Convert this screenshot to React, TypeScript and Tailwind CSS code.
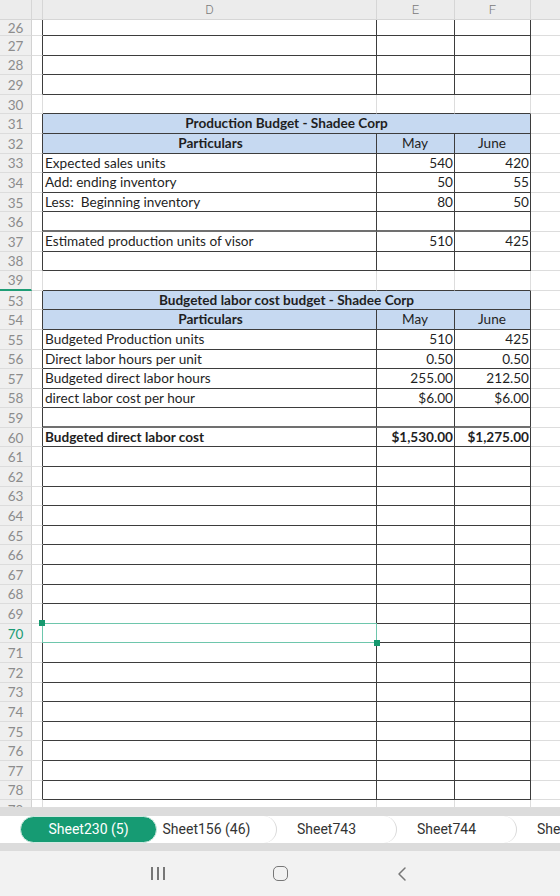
import clsx from "clsx";

type Row = {
  n: number;
  h?: string;
  boxed?: boolean;
  kind?: "title" | "head";
  label?: string;
  may?: string;
  june?: string;
  bold?: boolean;
  thick?: boolean;
  freeze?: boolean;
  selected?: boolean;
  clipped?: boolean;
};

const GRID = "grid grid-cols-[32px_11px_334px_78px_76px_1fr]";
const CELL_FONT = "font-['Lato','Open_Sans',sans-serif] text-[13.6px] text-[#1f1f1f]";

const empty = (n: number, boxed = true): Row => ({ n, boxed });

const rows: Row[] = [
  { n: 26, h: "h-[16px]", boxed: true },
  empty(27),
  empty(28),
  empty(29),
  empty(30, false),
  { n: 31, boxed: true, kind: "title", label: "Production Budget - Shadee Corp" },
  { n: 32, boxed: true, kind: "head" },
  { n: 33, boxed: true, label: "Expected sales units", may: "540", june: "420" },
  { n: 34, boxed: true, label: "Add: ending inventory", may: "50", june: "55" },
  { n: 35, boxed: true, label: "Less:  Beginning inventory", may: "80", june: "50" },
  { n: 36, boxed: true, thick: true },
  { n: 37, boxed: true, label: "Estimated production units of visor", may: "510", june: "425" },
  empty(38),
  { n: 39, freeze: true },
  { n: 53, boxed: true, kind: "title", label: "Budgeted labor cost budget - Shadee Corp" },
  { n: 54, boxed: true, kind: "head" },
  { n: 55, boxed: true, label: "Budgeted Production units", may: "510", june: "425" },
  { n: 56, boxed: true, label: "Direct labor hours per unit", may: "0.50", june: "0.50" },
  { n: 57, boxed: true, label: "Budgeted direct labor hours", may: "255.00", june: "212.50" },
  { n: 58, boxed: true, label: "direct labor cost per hour", may: "$6.00", june: "$6.00" },
  { n: 59, boxed: true, thick: true },
  { n: 60, boxed: true, bold: true, label: "Budgeted direct labor cost", may: "$1,530.00", june: "$1,275.00" },
  ...Array.from({ length: 18 }, (_, i) => ({ ...empty(61 + i), selected: 61 + i === 70 })),
  { n: 79, h: "h-[8px]", clipped: true },
];

function SheetRow({ row, next }: { row: Row; next?: Row }) {
  const dark = row.boxed || next?.boxed;
  const bottom = row.thick
    ? "border-b-2 border-b-[#707070]"
    : dark
      ? "border-b border-b-[#3d3d3d]"
      : "border-b border-b-[#dddddd]";
  const right = row.boxed ? "border-r border-r-[#3d3d3d]" : "border-r border-r-[#dddddd]";
  const blue = row.kind ? "bg-[#c6d9f1]" : "bg-white";
  const h = row.h ?? "h-[19.6px]";

  return (
    <div className={clsx(GRID, h)}>
      <div
        className={clsx(
          "flex justify-center overflow-hidden border-r border-r-[#d2d2d2] bg-[#efefef] font-['Lato',sans-serif] text-[13.5px] leading-[16px]",
          row.clipped ? "items-start pt-[2px]" : "items-center pt-[1px]",
          row.freeze ? "border-b-2 border-b-[#1f9d76]" : "border-b border-b-[#dcdcdc]",
          row.selected ? "text-[#1a9b74]" : "text-[#8c8c8c]",
        )}
      >
        {row.n}
      </div>
      <div className={clsx("bg-white border-b border-b-[#dddddd]", right)} />

      {row.kind === "title" ? (
        <div
          className={clsx(
            "col-span-3 flex items-center justify-center pt-[1px] font-bold leading-none",
            CELL_FONT,
            blue,
            bottom,
            right,
          )}
        >
          {row.label}
        </div>
      ) : (
        <>
          <div
            className={clsx(
              "relative flex items-center whitespace-pre pl-[2px] pt-[1px] leading-none",
              CELL_FONT,
              row.kind === "head" ? "justify-center font-bold" : "justify-start",
              row.bold && "font-bold",
              blue,
              bottom,
              right,
            )}
          >
            {row.kind === "head" ? "Particulars" : row.label}
            {row.selected && (
              <div className="absolute -left-px -top-px bottom-[-1px] right-[-1px] z-10 border border-[#6ec6ac]">
                <span className="absolute -left-[4px] -top-[4px] h-[6px] w-[6px] bg-[#16996f]" />
                <span className="absolute -bottom-[4px] -right-[4px] h-[6px] w-[6px] bg-[#16996f]" />
              </div>
            )}
          </div>
          <div
            className={clsx(
              "flex items-center pr-[1px] pt-[1px] leading-none",
              CELL_FONT,
              row.kind === "head" ? "justify-center" : "justify-end",
              row.bold && "font-bold",
              blue,
              bottom,
              right,
            )}
          >
            {row.kind === "head" ? "May" : row.may}
          </div>
          <div
            className={clsx(
              "flex items-center pr-[1px] pt-[1px] leading-none",
              CELL_FONT,
              row.kind === "head" ? "justify-center" : "justify-end",
              row.bold && "font-bold",
              blue,
              bottom,
              right,
            )}
          >
            {row.kind === "head" ? "June" : row.june}
          </div>
        </>
      )}
      <div className="bg-white border-b border-b-[#dddddd]" />
    </div>
  );
}

function ColumnHeader() {
  const cell =
    "flex items-center justify-center border-r border-r-[#d6d6d6] font-['Roboto',sans-serif] font-light text-[13px] text-[#7a7a7a]";
  return (
    <div className={clsx(GRID, "h-[20px] border-b border-b-[#d6d6d6] bg-[#ececec]")}>
      <div className={cell} />
      <div className={cell} />
      <div className={clsx(cell, "text-[#1a9b74]")}>D</div>
      <div className={cell}>E</div>
      <div className={cell}>F</div>
      <div />
    </div>
  );
}

const tabs = [
  { name: "Sheet156 (46)", z: "z-40" },
  { name: "Sheet743", z: "z-30" },
  { name: "Sheet744", z: "z-20" },
  { name: "Sheet745", z: "z-10" },
];

function SheetTabs() {
  return (
    <div className="bg-[#dcdcdc] py-[8px]">
      <div className="flex h-[27px] overflow-hidden bg-white pl-[20px] font-['Roboto',sans-serif] text-[14px]">
        <div className="relative z-50 flex w-[137px] shrink-0 items-center justify-center rounded-full border border-[#cfe9e0] bg-[#169b73] text-white">
          Sheet230 (5)
        </div>
        {tabs.map((t) => (
          <div
            key={t.name}
            className={clsx(
              "relative -ml-[20px] flex w-[140px] shrink-0 items-center justify-center rounded-r-full border-r border-r-[#d9d9d9] bg-white text-[#333333]",
              t.z,
            )}
          >
            {t.name}
          </div>
        ))}
      </div>
    </div>
  );
}

function NavBar() {
  return (
    <div className="flex h-[45px] items-center justify-center bg-[#f2f2f2]">
      <div className="flex w-[122px] justify-center gap-[4px]">
        <span className="h-[13px] w-[2px] bg-[#777777]" />
        <span className="h-[13px] w-[2px] bg-[#777777]" />
        <span className="h-[13px] w-[2px] bg-[#777777]" />
      </div>
      <div className="flex w-[122px] justify-center">
        <span className="h-[15px] w-[15px] rounded-[5px] border-[1.5px] border-[#777777]" />
      </div>
      <div className="flex w-[122px] justify-center">
        <svg width="10" height="16" viewBox="0 0 10 16" fill="none">
          <path d="M8 2 L2 8 L8 14" stroke="#777777" strokeWidth="1.5" strokeLinecap="round" strokeLinejoin="round" />
        </svg>
      </div>
    </div>
  );
}

export default function App() {
  return (
    <div className="flex h-[896px] w-[560px] flex-col overflow-hidden bg-white">
      <div className="h-[808px] shrink-0 overflow-hidden">
        <ColumnHeader />
        {rows.map((r, i) => (
          <SheetRow key={r.n} row={r} next={rows[i + 1]} />
        ))}
      </div>
      <SheetTabs />
      <NavBar />
    </div>
  );
}
